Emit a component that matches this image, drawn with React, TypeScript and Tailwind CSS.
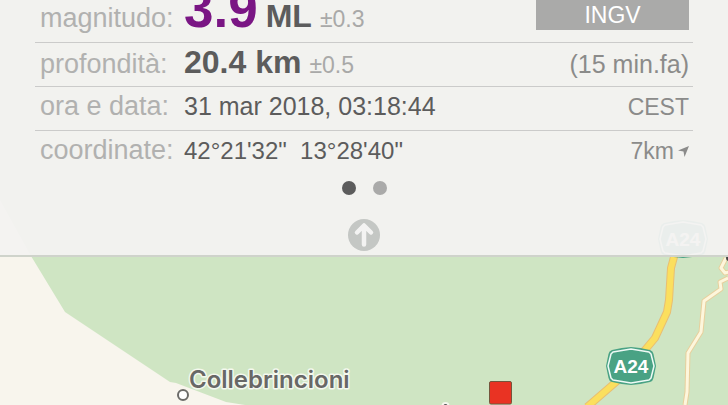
import React, { useState } from "react";

const pages = [
  { id: 1, title: "Dettagli" },
  { id: 2, title: "Altre informazioni" },
];

const motorway = "M680 230 L674 257 L671 268 L669 300 L667 312 L655 338 L645 350 L616 382 L587 407";
const minorRoad =
  "M728 278 L720 282 L721 289 L704 301 L701 332 L688 353 L687 392 L685 405 M729 272 L725 273 L721 268 L726 258";

const RoadShield = ({ x, y }: { x: number; y: number }) => (
  <g transform={`translate(${x} ${y})`}>
    <path
      d="M-19 -16 Q-9 -18.5 0 -19 Q9 -18.5 19 -16 Q22 -15 22.5 -12 L25 0 L22.5 12 Q22 15 19 16 Q9 18.5 0 19 Q-9 18.5 -19 16 Q-22 15 -22.5 12 L-25 0 L-22.5 -12 Q-22 -15 -19 -16 Z"
      fill="#49a284"
    />
    <path
      d="M-18 -14 L0 -17 L18 -14 L20 -12 L23 0 L20 12 L18 14 L0 17 L-18 14 L-20 12 L-23 0 L-20 -12 Z"
      fill="none"
      stroke="#eefaf5"
      strokeWidth="1.5"
      strokeLinejoin="round"
    />
    <text
      x="0"
      y="7"
      textAnchor="middle"
      className="fill-white font-['Liberation_Sans',sans-serif] text-[19px] font-bold"
    >
      A24
    </text>
  </g>
);

const MapView = () => (
  <svg
    viewBox="0 0 728 405"
    preserveAspectRatio="xMidYMid slice"
    className="absolute inset-0 h-full w-full"
  >
    <path d="M0 200 L31 256 L65 312 L170 382 L176 383 L226 402 L245 405 H728 V0 H0 Z" fill="#cfe5c3" />

    {/* secondary road */}
    <g fill="none" strokeLinejoin="round">
      <path d={minorRoad} stroke="#e8cf9c" strokeWidth="5" />
      <path d={minorRoad} stroke="#fdf6dc" strokeWidth="3" />
    </g>
    <circle cx="729" cy="258" r="3" fill="#444" />

    {/* motorway */}
    <g fill="none" strokeLinejoin="round">
      <path d={motorway} stroke="#e9bf72" strokeWidth="8" />
      <path d={motorway} stroke="#fbdf5e" strokeWidth="6" />
    </g>
    <RoadShield x={683} y={239} />
    <RoadShield x={631} y={366} />

    {/* town */}
    <circle cx="183" cy="395" r="5" fill="#fff" stroke="#6b6b68" strokeWidth="2" />
    <text
      x="189"
      y="388"
      stroke="#f4f8ee"
      strokeWidth="3"
      strokeLinejoin="round"
      paintOrder="stroke"
      className="fill-[#686866] font-['Inter',sans-serif] text-[24px] font-semibold"
    >
      Collebrincioni
    </text>

    <circle cx="445.5" cy="406" r="4" fill="#f4f8ee" />
    <circle cx="445.5" cy="406" r="2" fill="#555" />

    {/* epicentre */}
    <rect x="489.5" y="381.5" width="22" height="22.5" rx="1.5" fill="#e93323" stroke="#74553c" />
  </svg>
);

type RowProps = {
  label: string;
  children: React.ReactNode;
  aside: React.ReactNode;
};

const Row = ({ label, children, aside }: RowProps) => (
  <div className="flex h-11 items-baseline border-b border-[#cbcbca] pt-[5px] pr-1 pl-[5px] leading-7 last:border-b-0">
    <dt className="w-36 shrink-0 text-[27px] text-[#b1b1b0]">{label}</dt>
    <dd className="flex grow items-baseline justify-between whitespace-pre">
      <span className="text-[#5c5c5c]">{children}</span>
      <span className="text-[#8b8b8a]">{aside}</span>
    </dd>
  </div>
);

const App = () => {
  const [page, setPage] = useState(1);

  return (
    <div className="relative min-h-screen overflow-hidden bg-[#f8f5ed] font-['Liberation_Sans',Arial,sans-serif]">
      <MapView />
      <section className="relative border-b-2 border-[#cfd3cb] bg-[#f3f2f1]/95 px-[35px] pb-1">
        <dl>
          <div className="flex h-[43px] items-baseline border-b border-[#cbcbca] pr-1 pl-[5px] leading-[18px]">
            <dt className="w-36 shrink-0 text-[27px] text-[#b1b1b0]">magnitudo:</dt>
            <dd className="flex grow items-baseline gap-2">
              <span className="text-[53px] font-bold text-[#7a1684]">3.9</span>
              <span className="text-[32px] font-bold text-[#5c5c5c]">ML</span>
              <span className="text-[23px] text-[#a9a9a8]">±0.3</span>
            </dd>
            <dd className="self-start">
              <button className="flex h-[30px] w-[153px] items-center justify-center bg-[#aaaaa9] text-[23px] text-white">
                INGV
              </button>
            </dd>
          </div>
          <Row label="profondità:" aside={<span className="text-[25px]">(15 min.fa)</span>}>
            <span className="text-[32px] font-bold">20.4 km</span>
            <span className="ml-2 text-[23px] text-[#a9a9a8]">±0.5</span>
          </Row>
          <Row label="ora e data:" aside={<span className="text-[23px]">CEST</span>}>
            <span className="text-[25px]">31 mar 2018, 03:18:44</span>
          </Row>
          <Row
            label="coordinate:"
            aside={
              <span className="flex items-center gap-1 text-[23px]">
                7km
                <svg viewBox="0 0 11 11" className="size-[11px] fill-current">
                  <path d="M11 0 L6.5 11 L5.5 5.5 L0 4.5 Z" />
                </svg>
              </span>
            }
          >
            <span className="text-[24px]">{`42°21'32"  13°28'40"`}</span>
          </Row>
        </dl>

        <div className="flex justify-center gap-[17px] pt-1.5">
          {pages.map((item) => (
            <button
              key={item.id}
              aria-label={item.title}
              onClick={() => setPage(item.id)}
              className={`size-3.5 rounded-full ${page === item.id ? "bg-[#5c5c5c]" : "bg-[#aaaaa9]"}`}
            />
          ))}
        </div>
        <div className="flex justify-center pt-6">
          <button aria-label="Chiudi" className="size-8 rounded-full bg-[#c4c7c4]">
            <svg
              viewBox="0 0 32 32"
              fill="none"
              stroke="#f3f3f2"
              strokeWidth="4.5"
              strokeLinecap="round"
              strokeLinejoin="round"
            >
              <path d="M16 25.5 V7 M9 13.5 L16 6.5 L23 13.5" />
            </svg>
          </button>
        </div>
      </section>
    </div>
  );
};

export default App;
